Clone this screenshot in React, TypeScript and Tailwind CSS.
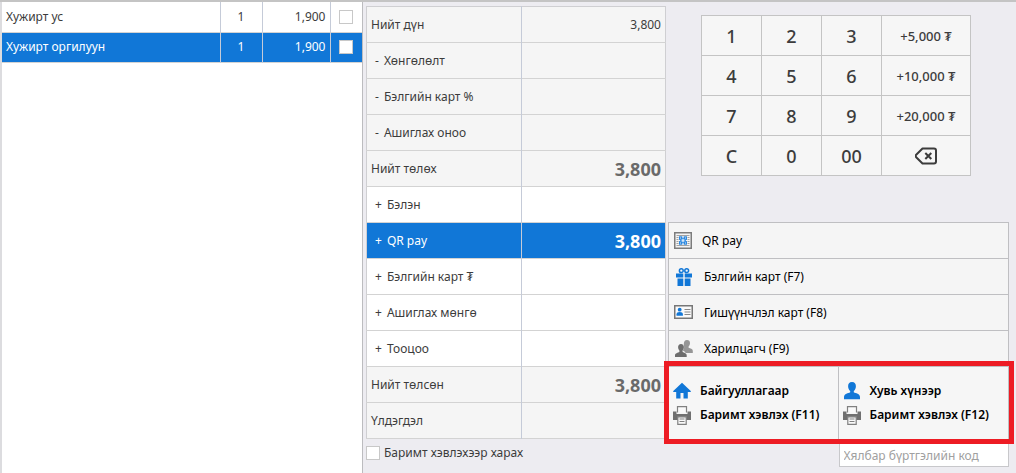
import React from 'react';
import clsx from 'clsx';

interface CartItem {
  name: string;
  qty: number;
  price: string;
}

interface TotalRow {
  label: string;
  sign?: '-' | '+';
  value?: string;
  large?: boolean;
  selected?: boolean;
}

const CART: CartItem[] = [
  { name: 'Хужирт ус', qty: 1, price: '1,900' },
  { name: 'Хужирт оргилуун', qty: 1, price: '1,900' },
];

const TOTALS: TotalRow[] = [
  { label: 'Нийт дүн', value: '3,800' },
  { label: 'Хөнгөлөлт', sign: '-' },
  { label: 'Бэлгийн карт %', sign: '-' },
  { label: 'Ашиглах оноо', sign: '-' },
  { label: 'Нийт төлөх', value: '3,800', large: true },
  { label: 'Бэлэн', sign: '+' },
  { label: 'QR pay', sign: '+', value: '3,800', large: true, selected: true },
  { label: 'Бэлгийн карт ₮', sign: '+' },
  { label: 'Ашиглах мөнгө', sign: '+' },
  { label: 'Тооцоо', sign: '+' },
  { label: 'Нийт төлсөн', value: '3,800', large: true },
  { label: 'Үлдэгдэл' },
];

const KEYS = ['1', '2', '3', '+5,000 ₮', '4', '5', '6', '+10,000 ₮', '7', '8', '9', '+20,000 ₮', 'C', '0', '00'];

function QrIcon() {
  return (
    <svg viewBox="0 0 18 17" className="h-[17px] w-[18px] shrink-0" aria-hidden="true">
      <rect x="0.75" y="0.75" width="16.5" height="15.5" fill="#f4f4f4" stroke="#7c7c7c" strokeWidth="1.5" />
      <path d="M2.5 3.5h13M2.5 5.5h2M13.5 5.5h2M2.5 7.5h2M13.5 7.5h2M2.5 9.5h2M13.5 9.5h2M2.5 11.5h2M13.5 11.5h2M2.5 13.5h13" stroke="#a2a2a2" />
      <path d="M5 4.500h3.500v1.500h1V4.500H13V8h-1v1h1v3.500H9.500V11h-1v1.500H5V9h1V8H5z" fill="#4a9ae6" />
      <path d="M5 4.500h3v3H5zM10 4.500h3v3h-3zM5 9.500h3v3H5zM10 9.500h3v3h-3z" fill="#2b88df" />
      <path d="M7.700 7.200h2.600v2.600H7.700zM6 5.500h1v1H6zM11 5.500h1v1h-1zM6 10.500h1v1H6zM11 10.500h1v1h-1z" fill="#d5e6f6" />
    </svg>
  );
}

function GiftIcon() {
  return (
    <svg viewBox="0 0 20 20" className="size-5 shrink-0" aria-hidden="true">
      <path d="M2 6.500h7.300v4H2zM10.700 6.500H18v4h-7.300zM3.500 11.500h5.800V19H3.500zM10.700 11.500h5.800V19h-5.800z" fill="#1177d7" />
      <circle cx="7.300" cy="3.700" r="1.900" fill="none" stroke="#1177d7" strokeWidth="1.500" />
      <circle cx="12.700" cy="3.700" r="1.900" fill="none" stroke="#1177d7" strokeWidth="1.500" />
    </svg>
  );
}

function MemberCardIcon() {
  return (
    <svg viewBox="0 0 20 20" className="size-5 shrink-0" aria-hidden="true">
      <rect x="0.750" y="2.750" width="17.500" height="12.500" fill="#fafafa" stroke="#777" strokeWidth="1.500" />
      <circle cx="5.700" cy="6.700" r="1.900" fill="#1177d7" />
      <path d="M2.500 12.800v-1.500c0-1.500 1.300-2.300 3.200-2.300s3.200.8 3.200 2.300v1.500z" fill="#1177d7" />
      <path d="M10.500 6.500h6M10.500 9h6M10.500 11.500h6" stroke="#888" />
    </svg>
  );
}

function PeopleIcon() {
  return (
    <svg viewBox="0 0 20 20" className="size-5 shrink-0" aria-hidden="true">
      <path d="M13 1c1.900 0 3 1.300 3 3.100 0 1.400-.6 2.600-1.400 3.300v1.300c1.600.7 4.200 1.200 4.200 3V14h-7.300c-.3-1.500-1.500-2-2.700-2.500 1.300-1.300 1.700-3.400 1-5.200-.1-.3 0-.6 0-1.200C9.800 2.600 11 1 13 1z" fill="#969696" />
      <path d="M7 5c1.900 0 2.900 1.400 2.900 3.100 0 1.400-.5 2.700-1.300 3.400V13c1.500.8 4.100 1.200 4.100 3.200V18H1v-1.800c0-2 2.900-2.400 4.400-3.200v-1.500c-.8-.7-1.300-2-1.300-3.400C4.100 6.400 5.100 5 7 5z" fill="#6e6e6e" />
    </svg>
  );
}

function HouseIcon() {
  return (
    <svg viewBox="0 0 18 18" className="size-[18px] shrink-0" aria-hidden="true">
      <path d="M9 .800 0 9.300l.5.700h2.700v6.500h4.300V11h3v5.500h4.300V10h2.700l.5-.700z" fill="#1177d7" />
    </svg>
  );
}

function PersonIcon() {
  return (
    <svg viewBox="0 0 18 18" className="size-[18px] shrink-0" aria-hidden="true">
      <path d="M9 0c2.700 0 3.900 1.800 3.900 4.200 0 2-.9 3.900-2.100 4.900v1.100c1.900 1.200 6.200 1.300 6.200 4.800v2.200H1V15c0-3.500 4.300-3.600 6.200-4.800V9.100C6 8.100 5.100 6.200 5.100 4.200 5.100 1.800 6.300 0 9 0z" fill="#1177d7" />
    </svg>
  );
}

function PrinterIcon() {
  return (
    <svg viewBox="0 0 18 19" className="h-[19px] w-[18px] shrink-0" aria-hidden="true">
      <path d="M4.500 6.500V.700h9v5.800" fill="#fafafa" stroke="#808080" strokeWidth="1.200" />
      <path d="M0 5.500h3.500V8h11V5.500H18V14H0z" fill="#707070" />
      <path d="M4.800 10.800h8.400v7.500H4.800z" fill="#fafafa" stroke="#808080" strokeWidth="1.200" />
      <path d="M6.500 13h5M6.500 15.500h5" stroke="#808080" strokeWidth="1.200" />
    </svg>
  );
}

function BackspaceIcon() {
  return (
    <svg viewBox="0 0 22 18" className="h-[18px] w-[22px]" fill="none" stroke="#3c3c3c" strokeWidth="2" aria-hidden="true">
      <path d="M7.500 1.500H19c1.100 0 2 .9 2 2v11c0 1.100-.9 2-2 2H7.500L1.200 10.300a2 2 0 0 1 0-2.600z" strokeLinejoin="round" />
      <path d="m10.300 6 6 6M16.300 6l-6 6" />
    </svg>
  );
}

const ACTIONS = [
  { label: 'QR pay', icon: <QrIcon /> },
  { label: 'Бэлгийн карт (F7)', icon: <GiftIcon /> },
  { label: 'Гишүүнчлэл карт (F8)', icon: <MemberCardIcon /> },
  { label: 'Харилцагч (F9)', icon: <PeopleIcon /> },
];

const RECEIPTS = [
  { title: 'Байгууллагаар', print: 'Баримт хэвлэх (F11)', icon: <HouseIcon /> },
  { title: 'Хувь хүнээр', print: 'Баримт хэвлэх (F12)', icon: <PersonIcon /> },
];

const CHECKBOX = 'block size-3.5 appearance-none border border-[#c8c8c8] bg-white checked:bg-[#1177d7]';

function CartTable() {
  const [selected, setSelected] = React.useState(1);

  return (
    <table className="w-full table-fixed">
      <colgroup>
        <col />
        <col className="w-[42px]" />
        <col className="w-[68px]" />
        <col className="w-8" />
      </colgroup>
      <tbody>
        {CART.map((item, i) => (
          <tr
            key={item.name}
            onClick={() => setSelected(i)}
            className={clsx('h-[30px] border-b border-[#d3d3d3]', i === selected && 'bg-[#1177d7] text-white')}
          >
            <td className="border-r border-[#c5cbd8] px-1">{item.name}</td>
            <td className="border-r border-[#c5cbd8] text-center">{item.qty}</td>
            <td className="border-r border-[#c5cbd8] px-1 text-right">{item.price}</td>
            <td className="px-2">
              <input type="checkbox" aria-label={item.name} className={CHECKBOX} />
            </td>
          </tr>
        ))}
      </tbody>
    </table>
  );
}

function TotalsTable() {
  return (
    <table className="w-full table-fixed border border-[#cfcfd2]">
      <colgroup>
        <col className="w-[52%]" />
        <col />
      </colgroup>
      <tbody>
        {TOTALS.map((row) => (
          <tr
            key={row.label}
            className={clsx(
              'h-9 border-b border-[#d3d3d3]',
              row.selected ? 'bg-[#1177d7] text-white' : row.sign === '+' ? 'bg-white' : 'bg-[#f5f5f5]'
            )}
          >
            <th scope="row" className={clsx('border-r border-[#c5cbd8] text-left font-normal', row.sign ? 'pl-2' : 'pl-1')}>
              {row.sign && <span className="mr-[5px]">{row.sign}</span>}
              {row.label}
            </th>
            <td className={clsx('pr-1 text-right', row.large && 'text-lg font-bold', row.large && !row.selected && 'text-[#6a6a6a]')}>
              {row.value}
            </td>
          </tr>
        ))}
      </tbody>
    </table>
  );
}

function Keypad() {
  return (
    <div className="mr-[38px] ml-[33px] grid grid-cols-[59fr_59fr_59fr_88fr] gap-px border border-[#c4c4c4] bg-[#c4c4c4]">
      {KEYS.map((key) => (
        <button
          key={key}
          type="button"
          className={clsx('h-[39px] bg-[#f6f6f6] font-medium text-[#3c3c3c]', key.startsWith('+') ? 'text-[13px]' : 'text-lg')}
        >
          {key}
        </button>
      ))}
      <button type="button" aria-label="Backspace" className="flex h-[39px] items-center justify-center bg-[#f6f6f6]">
        <BackspaceIcon />
      </button>
    </div>
  );
}

export default function App() {
  return (
    <div className="flex min-h-screen flex-col border-t-2 border-[#c4c4c4] bg-[#edecf1] font-['Noto_Sans',sans-serif] text-xs leading-5 text-[#3c3c3c]">
      <main className="grid flex-1 grid-cols-[363fr_303fr_350fr]">
        <section className="border-r border-l-2 border-r-[#bcbcbf] border-l-[#dcdcdf] bg-white">
          <CartTable />
        </section>

        <section className="pt-1 pl-[3px]">
          <TotalsTable />
          <label className="mt-1 flex items-center gap-1">
            <input type="checkbox" className={CHECKBOX} />
            Баримт хэвлэхээр харах
          </label>
        </section>

        <section className="flex flex-col pt-[13px] pr-[7px] pl-0.5 text-black">
          <Keypad />

          <div className="mt-[46px] border border-b-0 border-[#bfbfc2] bg-[#f5f5f5]">
            {ACTIONS.map((action) => (
              <button
                key={action.label}
                type="button"
                className="flex h-9 w-full items-center gap-2.5 border-b border-[#bfbfc2] px-[5px] text-left"
              >
                {action.icon}
                {action.label}
              </button>
            ))}
          </div>

          <div className="relative border-x border-b border-[#bfbfc2] bg-[#f6f6f6]">
            <div className="grid grid-cols-2 divide-x divide-[#bfbfc2]">
              {RECEIPTS.map((receipt) => (
                <button key={receipt.title} type="button" className="flex h-[72px] flex-col justify-center gap-1 px-1 text-left font-semibold">
                  <span className="flex items-center gap-[9px]">
                    {receipt.icon}
                    {receipt.title}
                  </span>
                  <span className="flex items-center gap-[9px]">
                    <PrinterIcon />
                    {receipt.print}
                  </span>
                </button>
              ))}
            </div>
            <div className="pointer-events-none absolute -top-1.5 -right-1.5 -bottom-[5px] -left-[5px] border-[5px] border-[#ed1c24]" />
          </div>

          <input
            type="text"
            aria-label="Хялбар бүртгэлийн код"
            placeholder="Хялбар бүртгэлийн код"
            className="mt-[3px] h-6 w-1/2 self-end border border-[#c8c8cb] bg-white px-1 placeholder:text-[#a0a0a0]"
          />
        </section>
      </main>
    </div>
  );
}
